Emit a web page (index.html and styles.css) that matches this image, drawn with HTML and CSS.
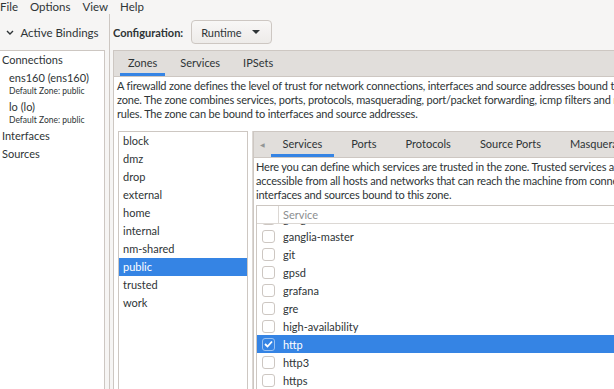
FILE: index.html
```html
<!DOCTYPE html>
<html lang="en">
<head>
    <meta charset="UTF-8">
    <title>Firewall Configuration</title>
    <link rel="stylesheet" href="styles.css">
</head>
<body>

<div class="menubar">
    <span>File</span>
    <span>Options</span>
    <span>View</span>
    <span>Help</span>
</div>

<div class="window">
    <aside class="sidebar">
        <div class="sidebar-head">
            <svg class="chevron" width="8" height="5" viewBox="0 0 8 5"><path d="M1 1 L4 4 L7 1" fill="none" stroke="#2e3436" stroke-width="1.4"/></svg>
            <span>Active Bindings</span>
        </div>
        <div class="bindings">
            <div class="group">Connections</div>
            <div class="conn">
                <div class="conn-name">ens160 (ens160)</div>
                <div class="conn-zone">Default Zone: public</div>
            </div>
            <div class="conn">
                <div class="conn-name">lo (lo)</div>
                <div class="conn-zone">Default Zone: public</div>
            </div>
            <div class="group">Interfaces</div>
            <div class="group">Sources</div>
        </div>
    </aside>

    <div class="pane-handle"></div>

    <main class="content">
        <div class="config-row">
            <span class="config-label">Configuration:</span>
            <button class="combo">
                <span>Runtime</span>
                <span class="combo-arrow"></span>
            </button>
        </div>

        <div class="notebook">
            <div class="tabs outer-tabs">
                <div class="tab active">Zones</div>
                <div class="tab">Services</div>
                <div class="tab">IPSets</div>
            </div>
            <div class="page">
                <p class="desc">A firewalld zone defines the level of trust for network connections, interfaces and source addresses bound to the<br>
                zone. The zone combines services, ports, protocols, masquerading, port/packet forwarding, icmp filters and rich<br>
                rules. The zone can be bound to interfaces and source addresses.</p>

                <div class="zones-pane">
                    <ul class="zone-list">
                        <li>block</li>
                        <li>dmz</li>
                        <li>drop</li>
                        <li>external</li>
                        <li>home</li>
                        <li>internal</li>
                        <li>nm-shared</li>
                        <li class="selected">public</li>
                        <li>trusted</li>
                        <li>work</li>
                    </ul>

                    <div class="pane-handle inner-handle"></div>

                    <div class="notebook inner">
                        <div class="tabs inner-tabs">
                            <span class="scroll-arrow">&#9664;</span>
                            <div class="tab active">Services</div>
                            <div class="tab">Ports</div>
                            <div class="tab">Protocols</div>
                            <div class="tab">Source Ports</div>
                            <div class="tab">Masquerading</div>
                        </div>
                        <div class="page inner-page">
                            <p class="desc">Here you can define which services are trusted in the zone. Trusted services are<br>
                            accessible from all hosts and networks that can reach the machine from connections,<br>
                            interfaces and sources bound to this zone.</p>

                            <div class="service-table">
                                <div class="table-head">
                                    <div class="check-col"></div>
                                    <div class="name-col">Service</div>
                                </div>
                                <div class="table-body">
                                    <div class="rows">
                                        <div class="row"><span class="checkbox"></span>ganglia-client</div>
                                        <div class="row"><span class="checkbox"></span>ganglia-master</div>
                                        <div class="row"><span class="checkbox"></span>git</div>
                                        <div class="row"><span class="checkbox"></span>gpsd</div>
                                        <div class="row"><span class="checkbox"></span>grafana</div>
                                        <div class="row"><span class="checkbox"></span>gre</div>
                                        <div class="row"><span class="checkbox"></span>high-availability</div>
                                        <div class="row selected"><span class="checkbox checked"><svg width="9" height="8" viewBox="0 0 9 8"><path d="M1 4 L3.5 6.5 L8 1.5" fill="none" stroke="#fff" stroke-width="1.8"/></svg></span>http</div>
                                        <div class="row"><span class="checkbox"></span>http3</div>
                                        <div class="row"><span class="checkbox"></span>https</div>
                                        <div class="row"><span class="checkbox"></span>imap</div>
                                    </div>
                                </div>
                            </div>
                        </div>
                    </div>
                </div>
            </div>
        </div>
    </main>
</div>

</body>
</html>
```

FILE: styles.css
```css
body, html {
    margin: 0;
    padding: 0;
}

body {
    width: 614px;
    height: 389px;
    overflow: hidden;
    background-color: #f6f5f4;
    font-family: Lato, "Liberation Sans", sans-serif;
    font-size: 11px;
    color: #2e3436;
}

/* menu */

.menubar {
    display: flex;
    gap: 12px;
    height: 14px;
    line-height: 14px;
    font-size: 11.5px;
}

.window {
    display: flex;
    height: 375px;
}

/* left side: active bindings */

.sidebar {
    width: 105px;
    flex: none;
    display: flex;
    flex-direction: column;
}

.sidebar-head {
    height: 36px;
    flex: none;
    display: flex;
    align-items: center;
    justify-content: center;
    gap: 6px;
    font-size: 11.5px;
}

.bindings {
    flex: 1;
    background-color: #fff;
    border-top: 1px solid #cdc7c2;
    border-right: 1px solid #cdc7c2;
}

.group {
    height: 18px;
    line-height: 18px;
    padding-left: 2px;
}

.conn {
    height: 28px;
    padding: 1px 0 0 9px;
}

.conn-name {
    line-height: 15px;
}

.conn-zone {
    line-height: 13px;
    font-size: 8.5px;
}

.pane-handle {
    width: 4px;
    flex: none;
    border-right: 1px solid #cdc7c2;
    margin-right: 3px;
}

/* right side */

.content {
    width: 520px;
    flex: none;
    display: flex;
    flex-direction: column;
    overflow: hidden;
}

.config-row {
    height: 36px;
    flex: none;
    display: flex;
    align-items: center;
    gap: 8px;
}

.config-label {
    font-weight: bold;
}

.combo {
    width: 81px;
    height: 24px;
    display: flex;
    align-items: center;
    justify-content: space-between;
    padding: 0 11px 0 9px;
    border: 1px solid #cdc7c2;
    border-radius: 4px;
    background: linear-gradient(#f8f7f6, #edebe9);
    font: inherit;
    color: inherit;
}

.combo-arrow {
    width: 0;
    height: 0;
    border-left: 4px solid transparent;
    border-right: 4px solid transparent;
    border-top: 4px solid #2e3436;
}

.notebook {
    flex: 1;
    min-height: 0;
    display: flex;
    flex-direction: column;
    overflow: hidden;
    border: 1px solid #cdc7c2;
    border-right: none;
    border-bottom: none;
    background-color: #fff;
}

.tabs {
    flex: none;
    display: flex;
    align-items: stretch;
    background-color: #e1dedb;
    border-bottom: 1px solid #cdc7c2;
}

.tab {
    display: flex;
    align-items: center;
    border-bottom: 3px solid transparent;
    white-space: nowrap;
}

.tab.active {
    border-bottom-color: #3584e4;
}

.outer-tabs {
    height: 25px;
    gap: 7px;
    padding-left: 6px;
}

.outer-tabs .tab {
    padding: 0 8px;
}

.page {
    flex: 1;
    min-height: 0;
    display: flex;
    flex-direction: column;
    padding: 2px 0 0 3px;
}

.desc {
    flex: none;
    margin: 0;
    line-height: 14px;
    letter-spacing: -0.18px;
    white-space: nowrap;
}

.zones-pane {
    flex: 1;
    display: flex;
    margin-top: 10px;
}

.zone-list {
    width: 128px;
    flex: none;
    margin: 0 0 0 1px;
    padding: 0;
    list-style: none;
    background-color: #fff;
    border: 1px solid #cdc7c2;
    border-bottom: none;
}

.zone-list li {
    height: 18px;
    line-height: 18px;
    padding-left: 4px;
}

.zone-list li.selected,
.row.selected {
    background-color: #3584e4;
    color: #fff;
}

.inner-handle {
    width: 4px;
    margin-right: 0;
    border-right-color: #dcd8d4;
}

.notebook.inner {
    flex: 1;
    min-width: 0;
    border-top: none;
}

.inner-tabs {
    height: 25px;
    gap: 6px;
    border-top: 1px solid #cdc7c2;
}

.scroll-arrow {
    display: flex;
    align-items: center;
    padding-left: 6px;
    font-size: 6px;
    color: #929595;
}

.inner-tabs .tab {
    padding: 0 11.5px;
}

.inner-page {
    padding: 2px 0 0 2px;
}

.service-table {
    flex: 1;
    margin-top: 3px;
    border-top: 1px solid #cdc7c2;
    border-left: 1px solid #cdc7c2;
}

.table-head {
    display: flex;
    height: 17px;
    line-height: 17px;
    color: #8b8e8f;
    border-bottom: 1px solid #dcd8d4;
}

.check-col {
    width: 21px;
    border-right: 1px solid #dcd8d4;
}

.name-col {
    padding-left: 4px;
}

.table-body {
    height: 170px;
    overflow: hidden;
}

.rows {
    margin-top: -15px;
}

.row {
    display: flex;
    align-items: center;
    height: 18px;
    white-space: nowrap;
}

.checkbox {
    width: 11px;
    height: 11px;
    flex: none;
    display: flex;
    align-items: center;
    justify-content: center;
    margin: 0 8px 0 5px;
    background-color: #fff;
    border: 1px solid #cdc7c2;
    border-radius: 3px;
}

.checkbox.checked {
    background-color: #3584e4;
    border-color: #9ac2f2;
}
```
